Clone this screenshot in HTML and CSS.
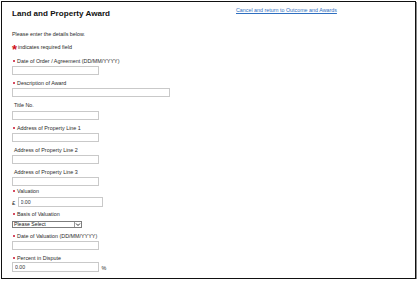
FILE: index.html
```html
<!DOCTYPE html>
<html lang="en">
  <head>
    <meta charset="UTF-8" />
    <meta name="viewport" content="width=device-width, initial-scale=1.0" />
    <title>Land and Property Award</title>
    <link rel="stylesheet" href="styles.css">
  </head>
  <body>
    <div class="frame">
      <div class="header">
        <h1 class="title">Land and Property Award</h1>
        <a class="cancel" href="#">Cancel and return to Outcome and Awards</a>
      </div>
      <p class="intro">Please enter the details below.</p>
      <p class="required-note"><span class="star">*</span>indicates required field</p>

      <div class="field field-first">
        <label class="label req"><span class="dot"></span>Date of Order / Agreement (DD/MM/YYYY)</label>
        <input class="text-input" type="text">
      </div>
      <div class="field">
        <label class="label req"><span class="dot"></span>Description of Award</label>
        <input class="text-input wide" type="text">
      </div>
      <div class="field">
        <label class="label">Title No.</label>
        <input class="text-input" type="text">
      </div>
      <div class="field">
        <label class="label req"><span class="dot"></span>Address of Property Line 1</label>
        <input class="text-input" type="text">
      </div>
      <div class="field">
        <label class="label">Address of Property Line 2</label>
        <input class="text-input" type="text">
      </div>
      <div class="field">
        <label class="label">Address of Property Line 3</label>
        <input class="text-input" type="text">
      </div>
      <div class="field field-valuation">
        <label class="label req"><span class="dot"></span>Valuation</label>
        <div class="money">
          <span class="currency">£</span>
          <input class="text-input tall" type="text" value="0.00">
        </div>
      </div>
      <div class="field field-basis">
        <label class="label req"><span class="dot"></span>Basis of Valuation</label>
        <div class="select-box">
          <span class="select-text">Please Select</span>
          <span class="select-arrow">
            <svg width="6" height="5" viewBox="0 0 6 5"><path d="M1 1.5 L3 3.5 L5 1.5" fill="none" stroke="#333" stroke-width="1"/></svg>
          </span>
        </div>
      </div>
      <div class="field field-dateval">
        <label class="label req"><span class="dot"></span>Date of Valuation (DD/MM/YYYY)</label>
        <input class="text-input" type="text">
      </div>
      <div class="field field-percent">
        <label class="label req"><span class="dot"></span>Percent in Dispute</label>
        <div class="percent">
          <input class="text-input tall" type="text" value="0.00">
          <span class="unit">%</span>
        </div>
      </div>
    </div>
  </body>
</html>
```

FILE: styles.css
```css
html,
body {
  margin: 0;
  background: #fff;
}
body {
  padding: 1px 0 0 1px;
  font-family: "Liberation Sans", Arial, sans-serif;
  color: #2b2b2b;
}
.frame {
  border: 1px solid #111;
  box-shadow: 1px 1px 0 #8a8a8a;
  padding: 5px 0 0 10px;
  width: 403px;
  height: 271px;
  overflow: hidden;
}
.header {
  display: flex;
  align-items: flex-start;
}
.title {
  margin: 1.5px 0 0;
  width: 224px;
  font-size: 8.1px;
  line-height: 10px;
  font-weight: bold;
  color: #111;
}
.cancel {
  font-size: 5.35px;
  line-height: 7px;
  color: #2f6fc0;
  text-decoration: underline;
}
.intro {
  margin: 12.5px 0 0;
  font-size: 5.4px;
  line-height: 7px;
}
.required-note {
  margin: 3.5px 0 0;
  font-size: 5.4px;
  line-height: 7px;
  display: flex;
  align-items: center;
}
.star {
  color: #d0101a;
  font-size: 13px;
  font-weight: bold;
  line-height: 7px;
  width: 6px;
  margin-top: 4px;
}
.field {
  margin-top: 4px;
}
.field-first {
  margin-top: 4.5px;
}
.label {
  display: flex;
  align-items: center;
  height: 8.2px;
  font-size: 5.4px;
  padding-left: 2px;
  margin-bottom: 1px;
}
.label.req {
  padding-left: 1px;
}
.dot {
  width: 2px;
  height: 2px;
  border-radius: 50%;
  background: #c8102e;
  margin-right: 2px;
}
.text-input {
  display: block;
  box-sizing: border-box;
  width: 87px;
  height: 9px;
  margin: 0;
  padding: 0 0 0 2px;
  border: 1px solid #c9c9c9;
  background: #fff;
  font-family: "Liberation Sans", Arial, sans-serif;
  font-size: 5.2px;
  color: #333;
  outline: none;
}
.text-input.wide {
  width: 158px;
}
.text-input.tall {
  height: 10px;
}
.field-valuation {
  margin-top: 0.5px;
}
.field-valuation .label {
  margin-bottom: 2.5px;
}
.money {
  display: flex;
  align-items: center;
}
.currency {
  font-size: 6px;
  width: 5.5px;
  margin-top: 1px;
}
.money .text-input {
  width: 85px;
}
.field-basis {
  margin-top: 2.5px;
}
.field-basis .label {
  margin-bottom: 3px;
}
.select-box {
  display: flex;
  align-items: stretch;
  width: 70px;
  height: 7px;
  box-sizing: border-box;
  border: 1px solid #7d7d7d;
  font-size: 5.2px;
  color: #222;
}
.select-text {
  flex: 1;
  line-height: 5px;
  padding-left: 1px;
}
.select-arrow {
  width: 6px;
  border-left: 1px solid #9a9a9a;
  display: flex;
  align-items: center;
  justify-content: center;
}
.field-dateval {
  margin-top: 3.5px;
}
.field-dateval .label {
  margin-bottom: 1.5px;
}
.field-percent {
  margin-top: 3.5px;
}
.field-percent .label {
  margin-bottom: 0;
}
.percent {
  display: flex;
  align-items: center;
}
.unit {
  font-size: 5.4px;
  margin-left: 2.5px;
  margin-top: 3px;
}
```
